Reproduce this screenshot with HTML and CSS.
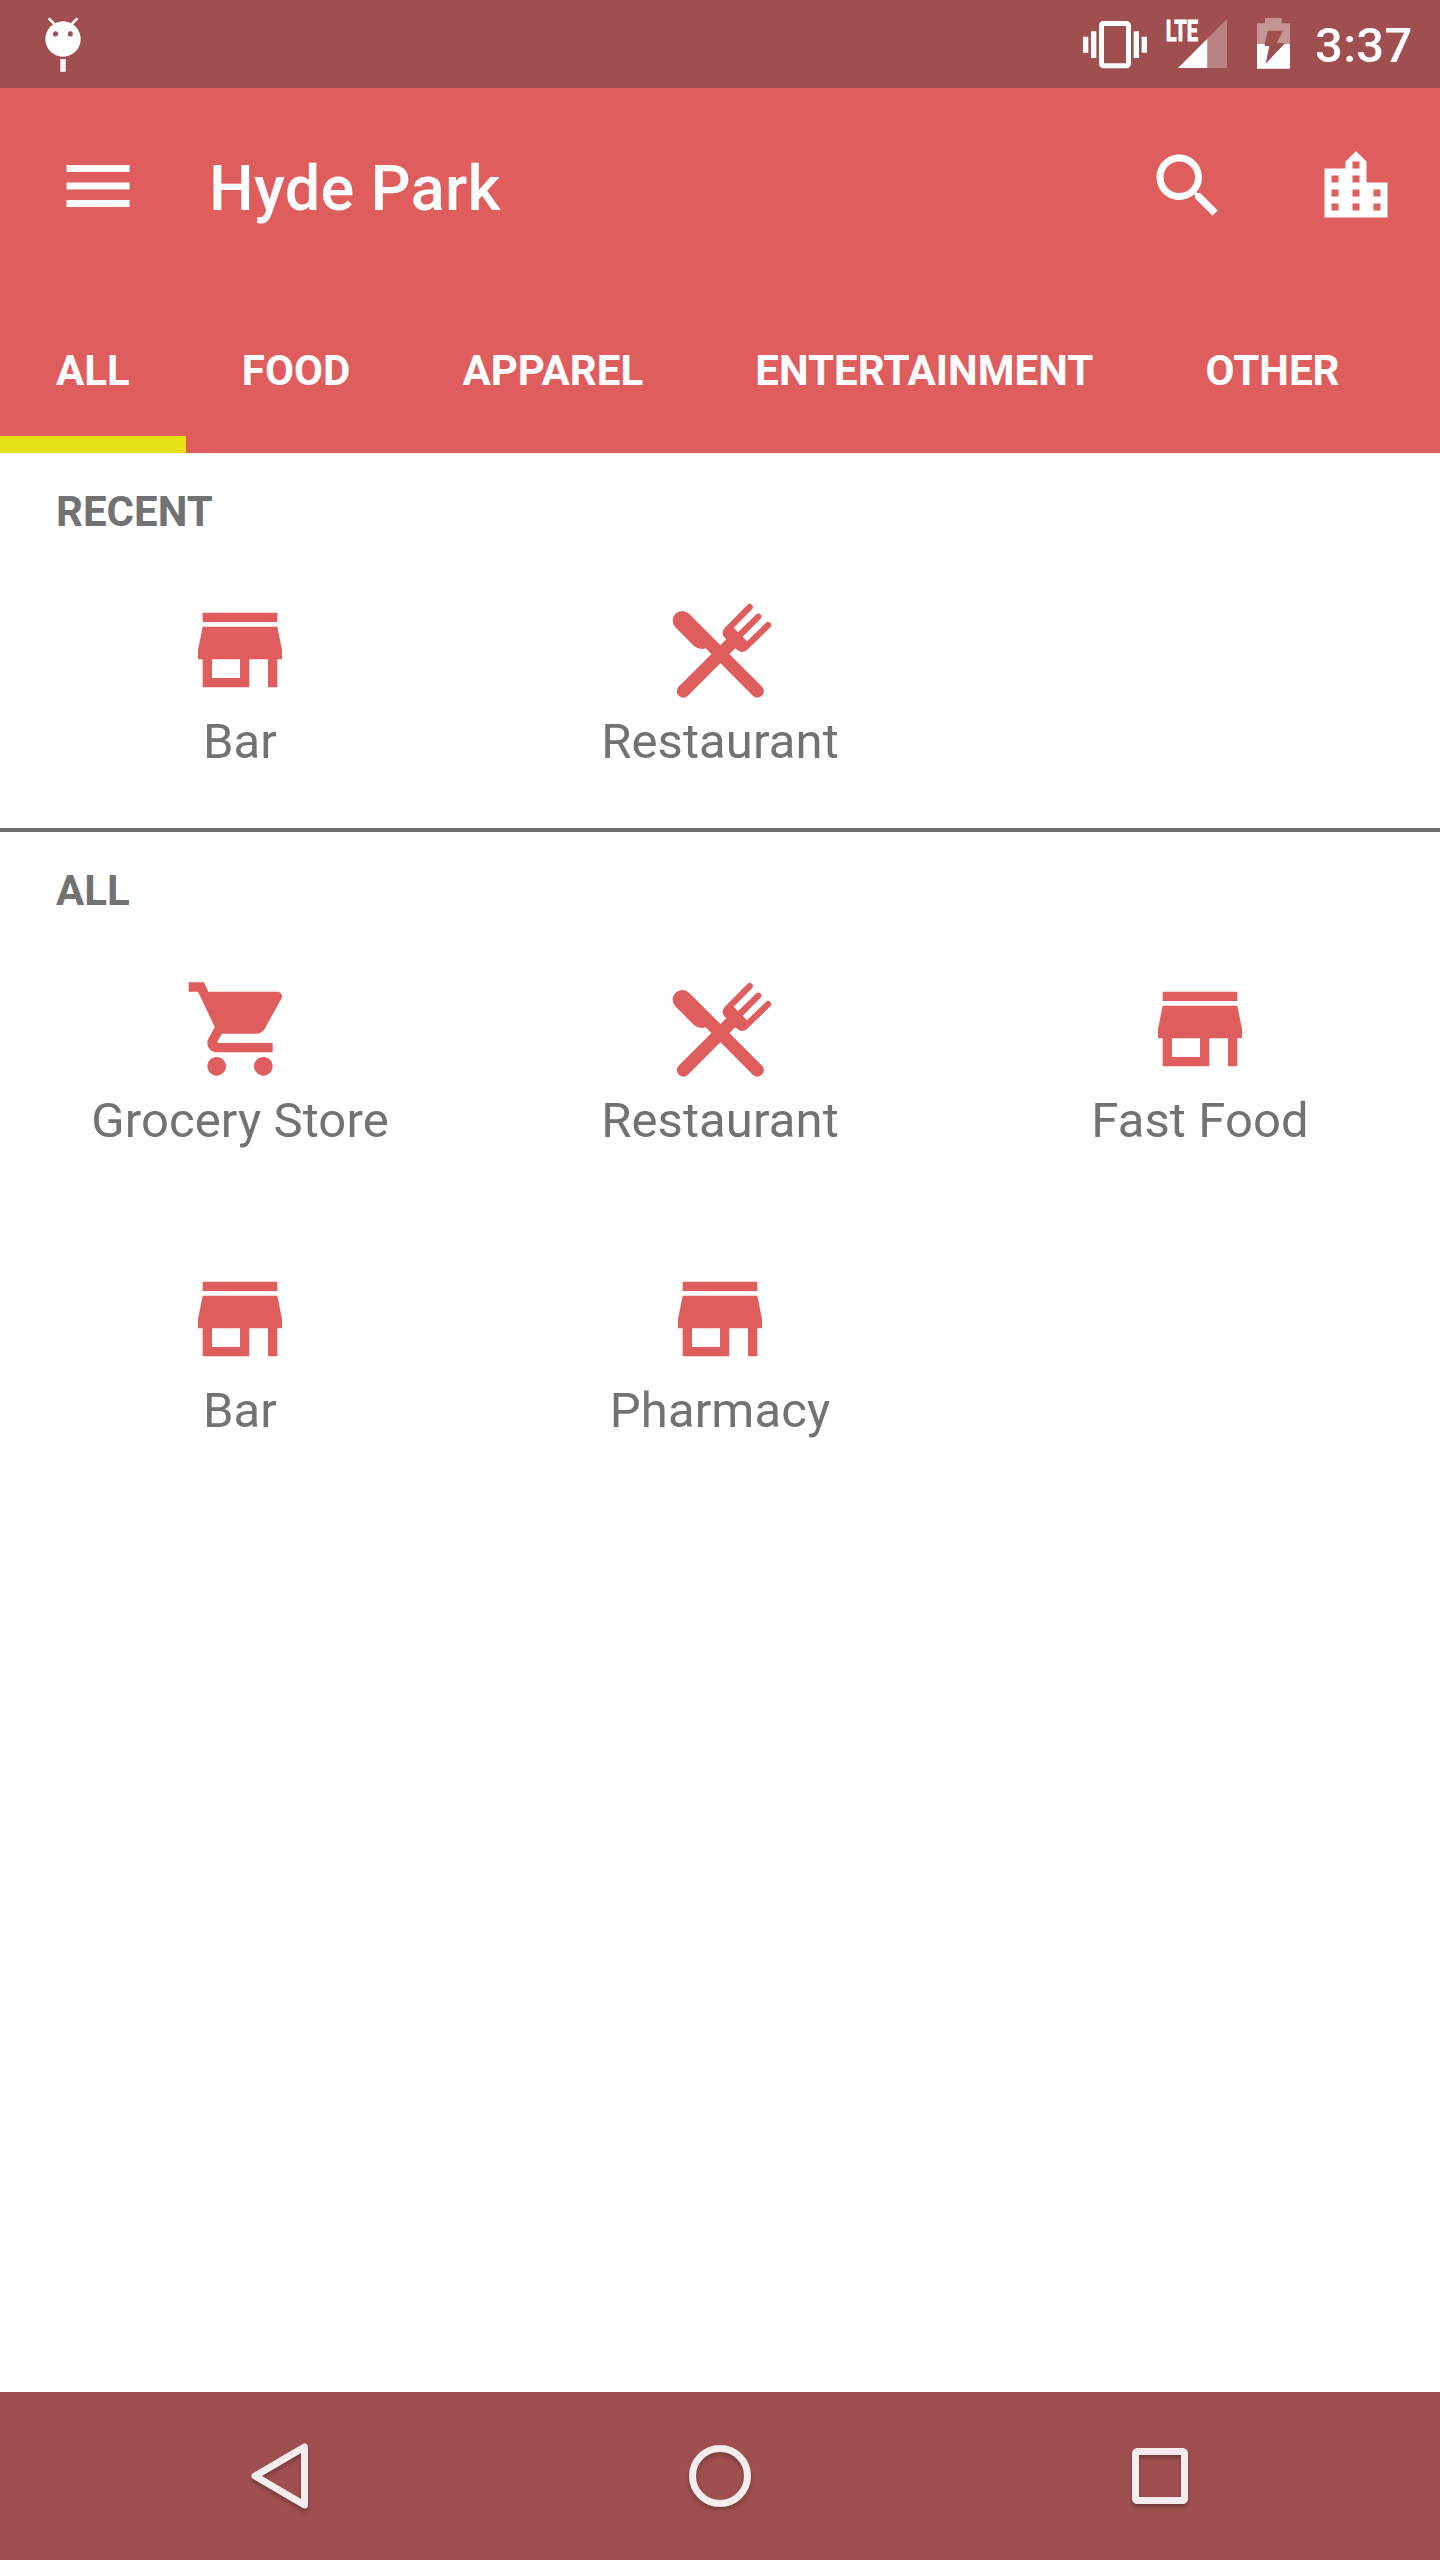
FILE: index.html
```html
<!DOCTYPE html>
<html lang="en">
<head>
<meta charset="utf-8">
<title>Hyde Park</title>
<link rel="stylesheet" href="styles.css">
</head>
<body>
<svg class="defs" aria-hidden="true">
  <symbol id="store" viewBox="0 0 24 24"><path d="M20 4H4v2h16V4zm1 10v-2l-1-5H4l-1 5v2h1v6h10v-6h4v6h2v-6h1zm-9 4H6v-4h6v4z"/></symbol>
  <symbol id="cart" viewBox="0 0 24 24"><path d="M7 18c-1.1 0-1.99.9-1.99 2S5.9 22 7 22s2-.9 2-2-.9-2-2-2zM1 2v2h2l3.6 7.59-1.35 2.45c-.16.28-.25.61-.25.96 0 1.1.9 2 2 2h12v-2H7.42c-.14 0-.25-.11-.25-.25l.03-.12.9-1.63h7.45c.75 0 1.41-.41 1.75-1.03l3.58-6.49c.08-.14.12-.31.12-.48 0-.55-.45-1-1-1H5.21l-.94-2H1zm16 16c-1.1 0-1.99.9-1.99 2s.89 2 1.99 2 2-.9 2-2-.9-2-2-2z"/></symbol>
  <symbol id="cutlery" viewBox="252 42 336 336"><path d="M286 142A29 29 0 0 1 327 101L547 321A19.5 19.5 0 0 1 519 348L377 205Q358 211 342 198Z"/><path d="M295 321L439 178L433 172Q422 158 434 144L502 75A9.5 9.5 0 0 1 516 88L461 143L474 157L530 102A9.5 9.5 0 0 1 543 115L488 170L501 184L557 129A9.5 9.5 0 0 1 571 142L501 210Q486 221 473 211L466 205L323 348A19.5 19.5 0 0 1 295 321Z"/></symbol>
</svg>
<div class="screen">
  <div class="status">
    <svg class="debug" width="36" height="56" viewBox="135 51 108 168">
      <path fill="#fff" fill-rule="evenodd" d="M189 64a53 53 0 1 0 .1 0zM166.500 94a8 8 0 1 1-.1 0zM211 94a8 8 0 1 1-.1 0zM181 177h16v38h-16z"/>
      <path stroke="#fff" stroke-width="8" d="M146 55l18 18M232 55l-18 18"/>
    </svg>
    <svg class="vibrate" width="64" height="48" viewBox="69 63 192 144">
      <rect x="124.500" y="70.500" width="81" height="127" rx="6" fill="none" stroke="#fff" stroke-width="15"/>
      <path fill="#fff" d="M69 110h16v48H69zM93 94h16v80H93zM221 94h16v80h-16zM245 110h16v48h-16z"/>
    </svg>
    <svg class="signal" width="64" height="64" viewBox="312 15 192 192">
      <path fill="#fff" fill-opacity=".29" d="M442 116l59-59v147h-59z"/>
      <path fill="#fff" d="M354 204l88-88v88z"/>
      <text x="317" y="122" textLength="97" lengthAdjust="spacingAndGlyphs">LTE</text>
    </svg>
    <svg class="battery" width="33" height="51" viewBox="591 54 99 153">
      <path fill="#fff" fill-opacity=".4" fill-rule="evenodd" d="M615 54h50v16h25v62h-17v-3h-23l19-37h-45l-10 40h-23V70h24z"/>
      <path fill="#fff" d="M591 132h23v6h14l-11 53 56-59h17v74h-99z"/>
    </svg>
    <span class="clock">3:37</span>
  </div>
  <header class="toolbar">
    <svg class="icon" viewBox="0 0 24 24"><path d="M3 18h18v-2H3v2zm0-5h18v-2H3v2zm0-7v2h18V6H3z"/></svg>
    <h1>Hyde Park</h1>
    <svg class="icon" viewBox="0 0 24 24"><path d="M15.500 14h-.79l-.28-.27C15.410 12.590 16 11.110 16 9.500 16 5.910 13.090 3 9.500 3S3 5.910 3 9.500 5.910 16 9.500 16c1.610 0 3.090-.59 4.230-1.570l.27.28v.79l5 4.990L20.490 19l-4.990-5zm-6 0C7.010 14 5 11.990 5 9.500S7.010 5 9.500 5 14 7.010 14 9.500 11.990 14 9.500 14z"/></svg>
    <svg class="icon" viewBox="0 0 24 24"><path d="M15 11V5l-3-3-3 3v2H3v14h18V11h-6zm-8 8H5v-2h2v2zm0-4H5v-2h2v2zm0-4H5V9h2v2zm6 8h-2v-2h2v2zm0-4h-2v-2h2v2zm0-4h-2V9h2v2zm0-4h-2V5h2v2zm6 12h-2v-2h2v2zm0-4h-2v-2h2v2z"/></svg>
  </header>
  <nav class="tabs">
    <a class="tab active">ALL</a>
    <a class="tab">FOOD</a>
    <a class="tab">APPAREL</a>
    <a class="tab">ENTERTAINMENT</a>
    <a class="tab">OTHER</a>
  </nav>
  <main>
    <section class="recent">
      <h2>RECENT</h2>
      <div class="grid">
        <div class="item"><svg><use href="#store"/></svg><span>Bar</span></div>
        <div class="item"><svg><use href="#cutlery"/></svg><span>Restaurant</span></div>
      </div>
    </section>
    <section>
      <h2>ALL</h2>
      <div class="grid">
        <div class="item"><svg><use href="#cart"/></svg><span>Grocery Store</span></div>
        <div class="item"><svg><use href="#cutlery"/></svg><span>Restaurant</span></div>
        <div class="item"><svg><use href="#store"/></svg><span>Fast Food</span></div>
        <div class="item"><svg><use href="#store"/></svg><span>Bar</span></div>
        <div class="item"><svg><use href="#store"/></svg><span>Pharmacy</span></div>
      </div>
    </section>
  </main>
  <footer class="navbar">
    <svg viewBox="0 0 100 100"><path d="M74.500 21V79L25 50Z"/></svg>
    <svg viewBox="0 0 100 100"><circle cx="50" cy="50" r="27.500"/></svg>
    <svg viewBox="0 0 100 100"><rect x="25.500" y="25.500" width="49" height="49" rx="2"/></svg>
  </footer>
</div>
</body>
</html>
```

FILE: styles.css
```css
* { box-sizing: border-box; }
body { margin: 0; background: #fff; font-family: Roboto, sans-serif; }
.defs { display: none; }
.screen { width: 1440px; height: 2560px; display: flex; flex-direction: column; }

.status { height: 88px; background: #9f4f50; display: flex; align-items: flex-start; color: #fff; flex: none; }
.status svg { display: block; flex: none; }
.debug { margin: 17px 0 0 45px; }
.vibrate { margin: 21px 0 0 auto; }
.signal { margin: 5px 0 0 17px; overflow: visible; }
.signal text { font: 700 87px Roboto, sans-serif; fill: #fff; stroke: #fff; stroke-width: 3px; }
.battery { margin: 18px 0 0 29px; }
.clock { width: 150px; padding: 17px 0 0 25px; font-size: 49px; line-height: 58px; font-weight: 500; letter-spacing: .3px; }

.toolbar { height: 196px; background: #df5d5d; display: flex; align-items: center; padding: 0 42px 0 56px; gap: 84px; flex: none; }
.icon { width: 84px; height: 84px; fill: #fff; flex: none; }
.toolbar h1 { margin: 0 auto 0 -15px; padding-top: 5px; color: #fff; font-size: 63px; line-height: 74px; font-weight: 500; letter-spacing: .3px; }

.tabs { height: 169px; background: #df5d5d; display: flex; flex: none; }
.tab { padding: 62px 56px 0; font-size: 42px; line-height: 49px; font-weight: 700; color: #fff; letter-spacing: .06px; }
.tab.active { border-bottom: 17px solid #e5e213; }

main { flex: 1; color: #727272; }
.recent { height: 379px; border-bottom: 4px solid #6f7070; }
h2 { margin: 0; padding: 34px 56px 0; font-size: 42px; line-height: 49px; font-weight: 700; }
.grid { display: grid; grid-template-columns: repeat(3, 480px); grid-auto-rows: 290px; padding-top: 58px; }
.item { display: flex; flex-direction: column; align-items: center; font-size: 49px; line-height: 57px; letter-spacing: .1px; }
.item svg { width: 112px; height: 112px; fill: #df5d5d; margin-bottom: 7px; }

.navbar { height: 168px; background: #9f4f50; display: flex; justify-content: center; align-items: center; gap: 340px; flex: none; }
.navbar svg { width: 100px; height: 100px; fill: none; stroke: #f5eded; stroke-width: 7; stroke-linejoin: round; filter: drop-shadow(0 3px 2px rgba(0,0,0,.25)); }
```
